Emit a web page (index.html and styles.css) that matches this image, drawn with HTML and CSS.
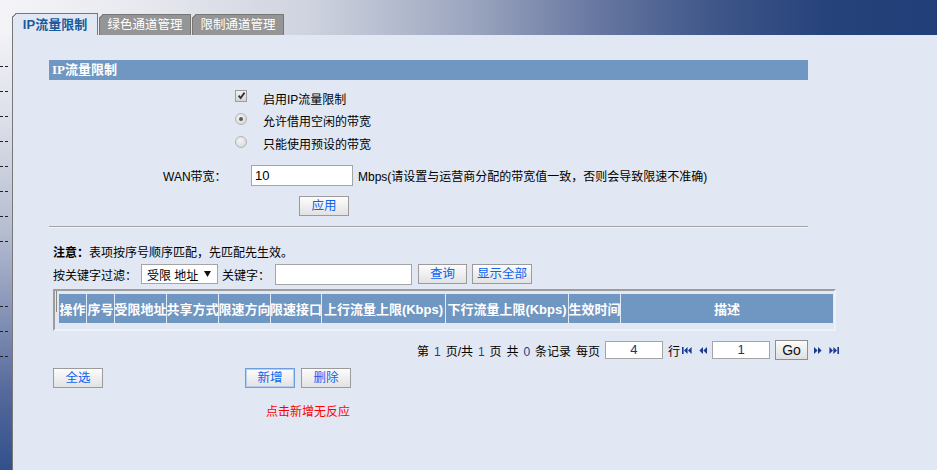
FILE: index.html
```html
<!DOCTYPE html>
<html lang="zh-CN">
<head>
<meta charset="utf-8">
<title>IP流量限制</title>
<link rel="stylesheet" href="styles.css">
</head>
<body>
<div class="page">
  <div class="header">
    <div class="tab active">IP流量限制</div>
    <div class="tab">绿色通道管理</div>
    <div class="tab">限制通道管理</div>
  </div>
  <div class="main">
    <div class="strip">
      <div class="dash-group">
        <i class="dash"></i><i class="dash"></i><i class="dash"></i><i class="dash"></i>
        <i class="dash"></i><i class="dash"></i><i class="dash"></i><i class="dash"></i>
      </div>
      <div class="dash-group second">
        <i class="dash"></i><i class="dash"></i><i class="dash"></i>
      </div>
    </div>
    <div class="panel">
      <div class="content">
        <div class="bar">IP流量限制</div>
        <div class="options">
          <div class="opt">
            <span class="chk"><svg width="9" height="9" viewBox="0 0 10 10"><path d="M1.8 5.2 L4 7.8 L8.4 1.8" fill="none" stroke="#333" stroke-width="2"/></svg></span>
            <span>启用IP流量限制</span>
          </div>
          <div class="opt">
            <span class="radio on"></span>
            <span>允许借用空闲的带宽</span>
          </div>
          <div class="opt">
            <span class="radio"></span>
            <span>只能使用预设的带宽</span>
          </div>
        </div>
        <div class="wan-row">
          <span class="wan-label">WAN带宽：</span>
          <span class="input wan-input">10</span>
          <span class="hint">Mbps(请设置与运营商分配的带宽值一致，否则会导致限速不准确)</span>
        </div>
        <div class="apply-row"><button class="btn">应用</button></div>
        <div class="rule"></div>
        <div class="note"><b>注意：</b>表项按序号顺序匹配，先匹配先生效。</div>
        <div class="filter">
          <span>按关键字过滤：</span>
          <span class="sel"><span>受限 地址</span><svg width="7" height="6" viewBox="0 0 7 6"><path d="M0 0 H7 L3.5 6 Z" fill="#111"/></svg></span>
          <span class="kw">关键字：</span>
          <span class="input kw-input"></span>
          <button class="btn q">查询</button>
          <button class="btn all">显示全部</button>
        </div>
        <div class="tbl">
          <div class="thead">
            <span>操作</span><span>序号</span><span>受限地址</span><span>共享方式</span><span>限速方向</span><span>限速接口</span><span>上行流量上限(Kbps)</span><span>下行流量上限(Kbps)</span><span>生效时间</span><span>描述</span>
          </div>
        </div>
        <div class="pager">
          <span class="ptext">第 <em>1</em> 页/共 <em>1</em> 页 共 <em>0</em> 条记录 每页</span>
          <span class="input pnum per">4</span>
          <span class="row-txt">行</span>
          <svg class="ico first" width="10" height="7" viewBox="0 0 10 7"><rect x="0" y="0" width="1.6" height="7" fill="#1a3a8f"/><path d="M5.6 0 L2 3.5 L5.6 7 Z M9.6 0 L6 3.5 L9.6 7 Z" fill="#1a3a8f"/></svg>
          <svg class="ico prev" width="8" height="7" viewBox="0 0 8 7"><path d="M4 0 L0.4 3.5 L4 7 Z M8 0 L4.4 3.5 L8 7 Z" fill="#1a3a8f"/></svg>
          <span class="input pnum cur">1</span>
          <button class="go">Go</button>
          <svg class="ico next" width="8" height="7" viewBox="0 0 8 7"><path d="M0 0 L3.6 3.5 L0 7 Z M4 0 L7.6 3.5 L4 7 Z" fill="#1a3a8f"/></svg>
          <svg class="ico last" width="10" height="7" viewBox="0 0 10 7"><path d="M0.4 0 L4 3.5 L0.4 7 Z M4.4 0 L8 3.5 L4.4 7 Z" fill="#1a3a8f"/><rect x="8.4" y="0" width="1.6" height="7" fill="#1a3a8f"/></svg>
        </div>
        <div class="actions">
          <button class="btn">全选</button>
          <button class="btn add">新增</button>
          <button class="btn del">删除</button>
        </div>
        <div class="warn">点击新增无反应</div>
      </div>
    </div>
  </div>
</div>
</body>
</html>
```

FILE: styles.css
```css
* { box-sizing: border-box; }
html, body { margin: 0; padding: 0; }
body {
  width: 937px;
  height: 470px;
  overflow: hidden;
  font-family: "Liberation Sans", "Noto Sans CJK SC", sans-serif;
  font-size: 12px;
  color: #000;
  background: #e1e8f4;
}
.page { width: 937px; height: 470px; display: flex; flex-direction: column; }

/* header + tabs */
.header {
  height: 35px;
  flex: none;
  display: flex;
  align-items: flex-end;
  padding-left: 12px;
  background: linear-gradient(to right, #f4f4f8 0%, #e8e9ef 15%, #cfd3df 33%, #9ca6bf 50%, #6676a0 64%, #3f5789 76%, #27437c 88%, #213e78 100%);
}
.tab {
  position: relative;
  width: 92px;
  height: 21px;
  margin-right: 1px;
  background: #959595;
  color: #fff;
  border: 1px solid #777;
  border-bottom: 0;
  text-align: center;
  line-height: 20px;
  font-size: 12.5px;
  clip-path: polygon(4px 0, 100% 0, 100% 100%, 0 100%, 0 4px);
}
.tab::before {
  content: "";
  position: absolute;
  left: -1px;
  top: -1px;
  width: 6px;
  height: 6px;
  background: linear-gradient(135deg, transparent 0 2.8px, #777 2.8px 3.9px, transparent 3.9px);
}
.tab.active {
  width: 86px;
  height: 22px;
  background: #e1e8f4;
  color: #1a5a9c;
  font-weight: bold;
  font-size: 13px;
  line-height: 21px;
}

/* body */
.main { flex: 1; display: flex; }
.strip {
  width: 12px;
  flex: none;
  padding-top: 31px;
  background: linear-gradient(to bottom, #f1f1f6 0%, #dcdfe9 20%, #b6bdd1 45%, #8391b5 65%, #55699c 82%, #32508c 100%);
}
.dash-group { display: flex; flex-direction: column; gap: 24px; }
.dash-group.second { margin-top: 64px; }
.dash {
  display: block;
  width: 8px;
  height: 1px;
  background: linear-gradient(to right, #222 0 3px, transparent 3px 5px, #222 5px 8px);
}
.panel {
  flex: 1;
  border-left: 1px solid #777;
  padding: 25px 0 0 36px;
}
.content { width: 790px; display: flex; flex-direction: column; }

.bar {
  width: 759px;
  height: 20px;
  background: #7096c2;
  color: #fff;
  font-weight: bold;
  font-size: 13px;
  font-family: "Liberation Serif", "Noto Sans CJK SC", serif;
  line-height: 20px;
  padding-left: 3px;
}

.options { margin-top: 7px; padding-left: 186px; }
.opt { display: flex; align-items: center; gap: 16px; height: 22px; }
.opt:nth-child(2) { height: 23px; }
.opt:nth-child(3) { height: 23px; }
.chk {
  width: 12px;
  height: 12px;
  margin-bottom: 5px;
  border: 1px solid #9c9c9c;
  background: linear-gradient(#f2f2f2, #d5d5d5);
  display: flex;
  align-items: center;
  justify-content: center;
}
.radio {
  width: 12px;
  height: 12px;
  margin-bottom: 4px;
  border-radius: 50%;
  border: 1px solid #b4b4b4;
  background: radial-gradient(circle at 40% 35%, #f4f4f4, #d2d2d2);
  display: flex;
  align-items: center;
  justify-content: center;
}
.radio.on::after {
  content: "";
  width: 4px;
  height: 4px;
  border-radius: 50%;
  background: #5a5a5a;
}

.input {
  display: inline-block;
  background: #fff;
  border: 1px solid #a5a5a5;
  height: 21px;
  line-height: 19px;
  padding-left: 3px;
  font-size: 13px;
}
.wan-row { margin-top: 9px; height: 23px; display: flex; align-items: center; padding-left: 114px; }
.wan-label { width: 88px; }
.wan-input { width: 102px; }
.hint { margin-left: 5px; }

.btn {
  width: 50px;
  height: 20px;
  padding: 0;
  border: 1px solid #9b9b9b;
  background: linear-gradient(#fdfdfd, #e2e2e2);
  color: #0a64f0;
  font: 12.5px "Liberation Sans", "Noto Sans CJK SC", sans-serif;
  line-height: 18px;
}
.apply-row { margin-top: 9px; padding-left: 250px; display: flex; }

.rule {
  margin-top: 10px;
  width: 759px;
  height: 2px;
  border-top: 1px solid #a3a3a3;
  border-bottom: 1px solid #f2f5fa;
}

.note { margin-top: 17px; line-height: 16px; padding-left: 4px; }
.note b { font-weight: bold; }

.filter { margin-top: 2px; height: 22px; display: flex; align-items: center; padding-left: 4px; }
.sel {
  margin-left: 4px;
  width: 77px;
  height: 20px;
  background: #fff;
  border: 1px solid #a5a5a5;
  display: flex;
  align-items: center;
  justify-content: space-between;
  padding: 0 6px 0 5px;
  font-size: 12px;
  white-space: nowrap;
}
.kw { margin-left: 4px; }
.kw-input { margin-left: 5px; width: 137px; }
.btn.q { margin-left: 6px; width: 49px; }
.btn.all { margin-left: 5px; width: 60px; }

.tbl {
  margin-top: 4px;
  margin-left: 4px;
  width: 783px;
  border: 2px solid;
  border-color: #9d9d9d #eef1f7 #eef1f7 #9d9d9d;
  padding: 3px 1px 6px 4px;
  background: linear-gradient(#8a8a8a, #8a8a8a) no-repeat 1px 0 / 1px 21px;
}
.thead {
  display: grid;
  grid-template-columns: 27px 27px 51px 51px 51px 50px 123px 122px 51px 212px;
  column-gap: 1px;
  height: 29px;
  background: #e4eaf4;
}
.thead span {
  background: #7096c2;
  color: #fff;
  font-weight: bold;
  font-size: 13px;
  display: flex;
  align-items: center;
  justify-content: center;
  white-space: nowrap;
  overflow: hidden;
}

.pager { margin-top: 9px; height: 20px; display: flex; align-items: center; justify-content: flex-end; }
.ptext { word-spacing: 1.6px; }
.pager em { font-style: normal; color: #1d3f8a; }
.pnum { width: 58px; height: 18px; line-height: 16px; text-align: center; padding: 0; color: #14357a; }
.per { margin-left: 5px; }
.row-txt { margin-left: 5px; }
.ico { display: block; }
.ico.first { margin-left: 2px; }
.ico.prev { margin-left: 7px; }
.cur { margin-left: 5px; }
.go {
  margin-left: 5px;
  width: 33px;
  height: 20px;
  padding: 0;
  border: 1px solid #8f8f8f;
  background: linear-gradient(#fbfbfb, #e0e0e0);
  font: 14px "Liberation Sans", sans-serif;
  color: #111;
}
.ico.next { margin-left: 6px; }
.ico.last { margin-left: 7px; }

.actions { margin-top: 8px; height: 20px; display: flex; padding-left: 4px; }
.btn.add { margin-left: 142px; border-color: #6d9ee0; box-shadow: inset 0 0 0 1px #b3cff2; }
.btn.del { margin-left: 6px; }

.warn { margin-top: 16px; line-height: 16px; padding-left: 217px; color: #ff0000; }
```
